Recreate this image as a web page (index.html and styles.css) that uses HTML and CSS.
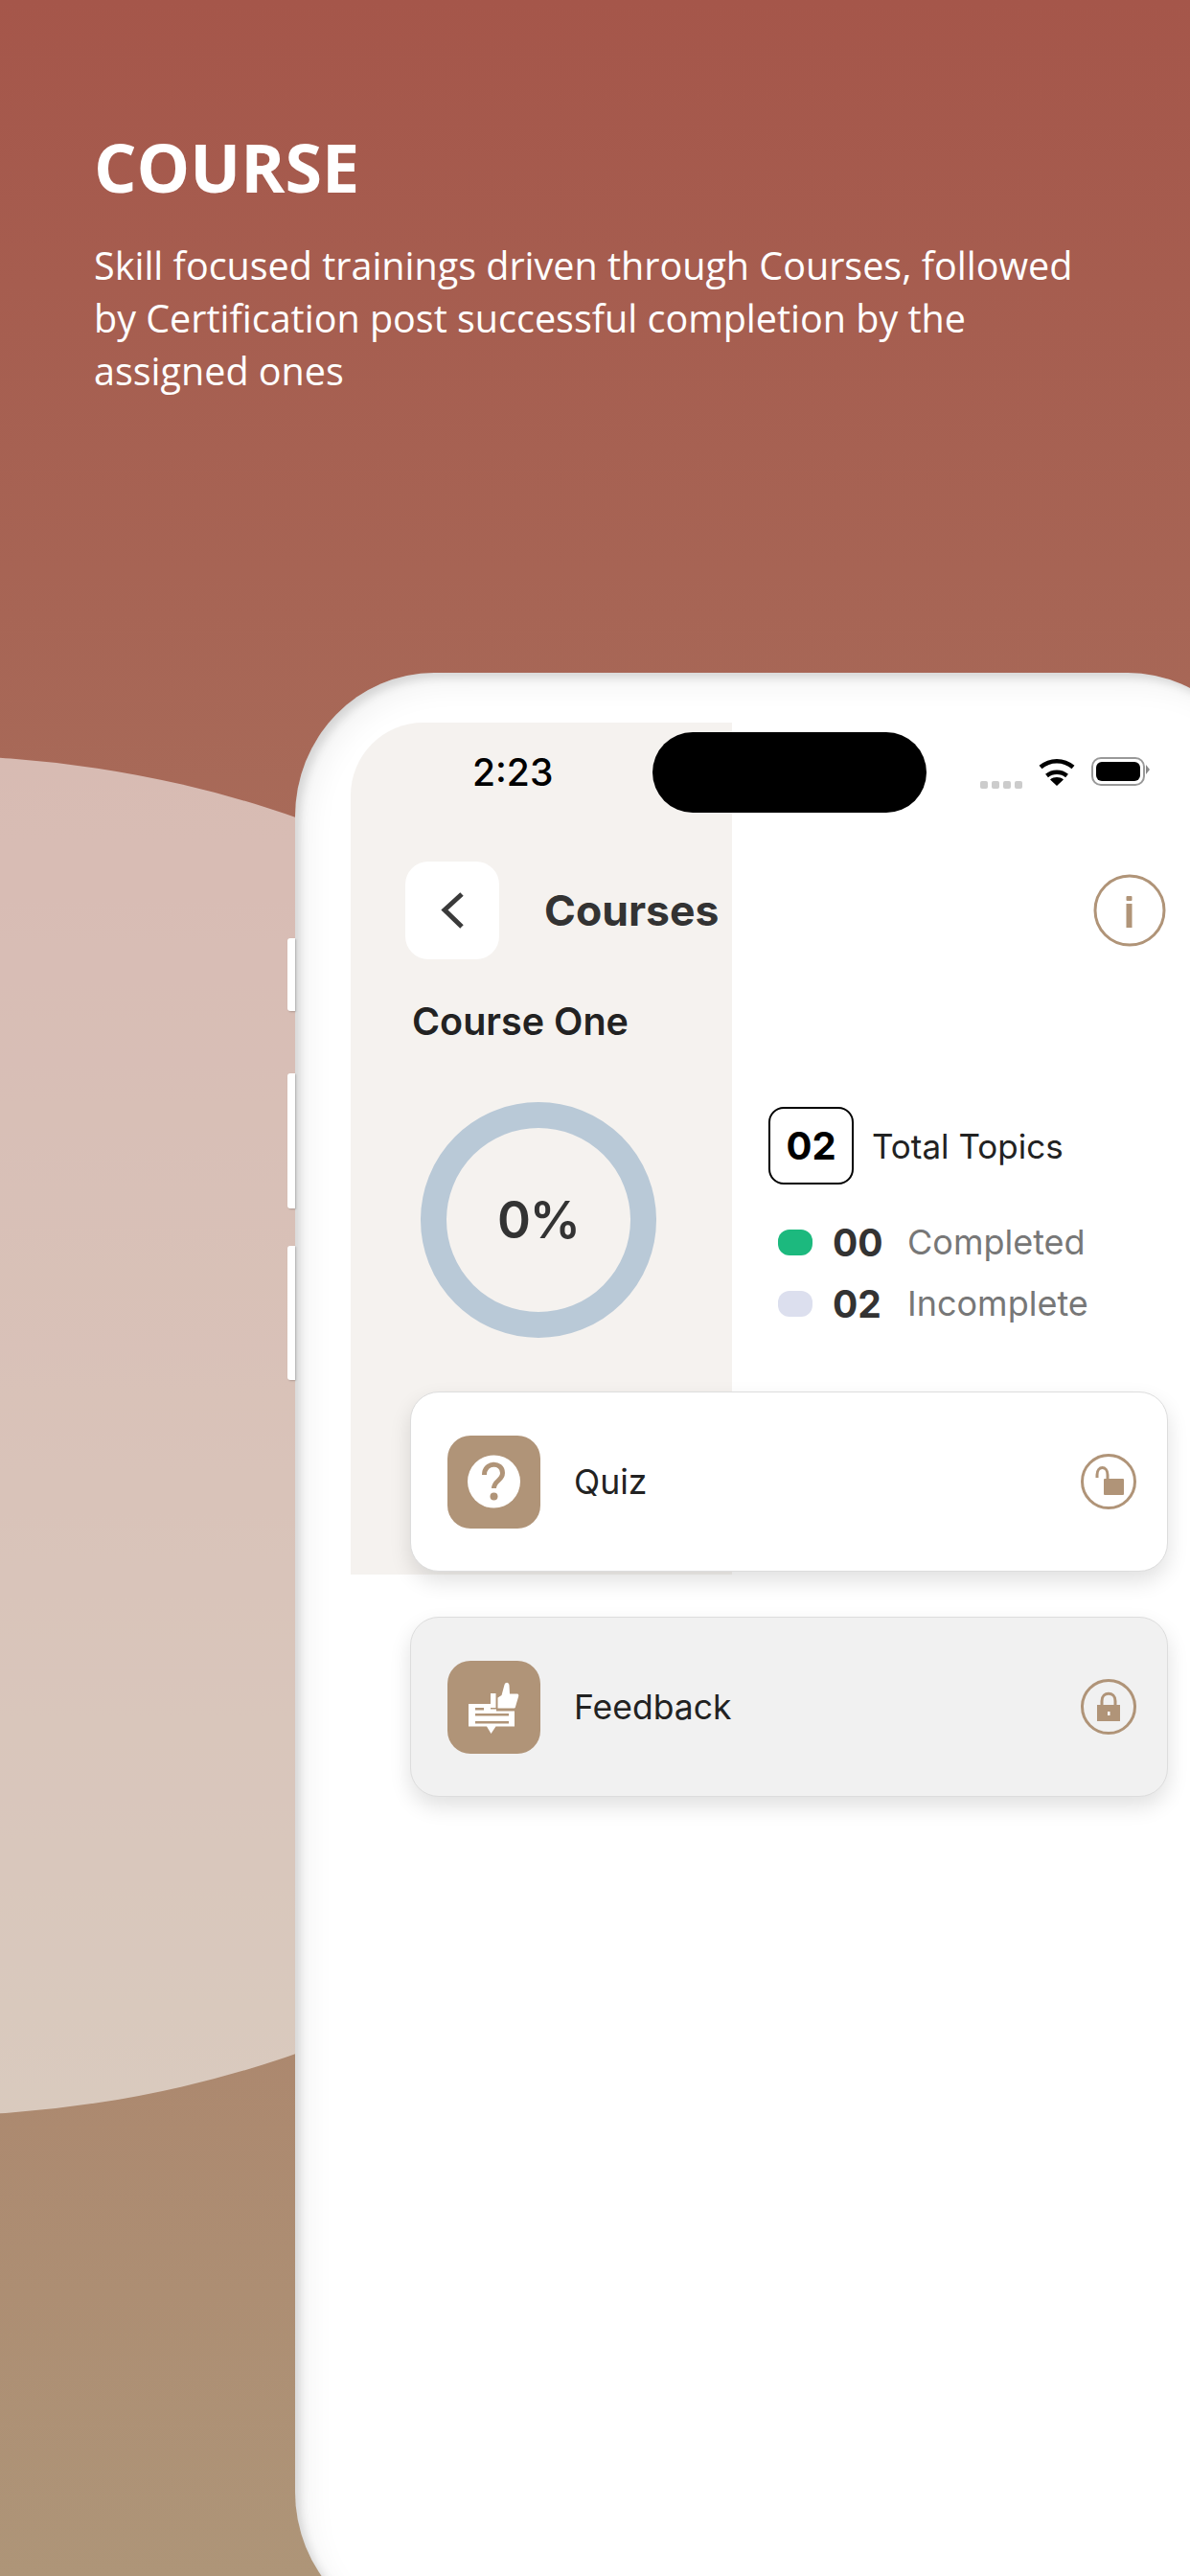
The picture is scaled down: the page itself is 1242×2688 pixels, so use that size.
FILE: index.html
```html
<!DOCTYPE html>
<html lang="en">
<head>
    <meta charset="UTF-8">
    <meta name="viewport" content="width=device-width, initial-scale=1.0">
    <title>Course</title>
    <link rel="stylesheet" href="styles.css">
</head>
<body>
    <div class="blob"></div>

    <header class="hero">
        <h1>COURSE</h1>
        <p>Skill focused trainings driven through Courses, followed<br>by Certification post successful completion by the<br>assigned ones</p>
    </header>

    <div class="phone">
        <span class="side-btn btn-one"></span>
        <span class="side-btn btn-two"></span>
        <span class="side-btn btn-three"></span>

        <div class="screen">
            <div class="status-bar">
                <span class="time">2:23</span>
                <span class="island"></span>
                <span class="signal"><i></i><i></i><i></i><i></i></span>
                <svg class="wifi" width="38" height="30" viewBox="0 0 38 30">
                    <path d="M19 30l-7-6.500c4-3.200 10-3.200 14 0z" fill="#000"/>
                    <path d="M8.500 19.500c6-5 15-5 21 0" fill="none" stroke="#000" stroke-width="4.500"/>
                    <path d="M2 10.500c10-8.500 24-8.500 34 0" fill="none" stroke="#000" stroke-width="4.500"/>
                </svg>
                <span class="battery"><i></i></span>
            </div>

            <div class="top-row">
                <a class="back-btn" href="#">
                    <svg width="30" height="42" viewBox="0 0 30 42">
                        <path d="M25 4L7 20.500 25 38" fill="none" stroke="#3a3a3a" stroke-width="5"/>
                    </svg>
                </a>
                <h2>Courses</h2>
                <svg class="info-icon" width="76" height="76" viewBox="0 0 76 76">
                    <circle cx="38" cy="38" r="36" fill="none" stroke="#b09478" stroke-width="3"/>
                    <rect x="34.500" y="23" width="6" height="5" rx="1" fill="#b09478"/>
                    <rect x="34.500" y="31" width="6" height="25" fill="#b09478"/>
                </svg>
            </div>

            <h3 class="course-name">Course One</h3>

            <div class="stats">
                <div class="ring">0%</div>
                <div class="details">
                    <div class="total-row">
                        <span class="total-box">02</span>
                        <span>Total Topics</span>
                    </div>
                    <div class="legend-row">
                        <span class="dot dot-green"></span>
                        <b>00</b>
                        <span>Completed</span>
                    </div>
                    <div class="legend-row">
                        <span class="dot dot-grey"></span>
                        <b>02</b>
                        <span>Incomplete</span>
                    </div>
                </div>
            </div>

            <div class="card">
                <span class="card-icon">
                    <svg width="97" height="97" viewBox="0 0 97 97">
                        <circle cx="48.500" cy="48" r="27.500" fill="#fff"/>
                        <path d="M38.500 41c0-14 19-14 19-2 0 8-9 8-9 16" fill="none" stroke="#b09478" stroke-width="5"/>
                        <circle cx="48.500" cy="63.500" r="4" fill="#b09478"/>
                    </svg>
                </span>
                <span class="card-label">Quiz</span>
                <svg class="lock" width="58" height="58" viewBox="0 0 58 58">
                    <circle cx="29" cy="29" r="27.500" fill="none" stroke="#b09478" stroke-width="3"/>
                    <path d="M17 25v-3c0-10 11-10 11 0v5" fill="none" stroke="#b09478" stroke-width="3"/>
                    <rect x="24" y="26" width="21" height="17" rx="1" fill="#b09478"/>
                </svg>
            </div>

            <div class="card card-off">
                <span class="card-icon">
                    <svg width="97" height="97" viewBox="0 0 97 97">
                        <path d="M22 45H45V50.500H51V52.500H70V68.500H50.500L45.500 76 41 68.500H22z" fill="#fff"/>
                        <rect x="29" y="49" width="9" height="2.500" fill="#b09478"/>
                        <rect x="29" y="55" width="35" height="2.500" fill="#b09478"/>
                        <rect x="29" y="63" width="35" height="2.500" fill="#b09478"/>
                        <rect x="45" y="34" width="5.500" height="15" fill="#fff"/>
                        <path d="M52.500 38.500l4-2.500 3-11c1-3 4.500-3 5 .5l.5 9h7.500c1.500 0 2 1 1.700 2.500L71 48c-.2 1-.8 1.500-2 1.500H52.500z" fill="#fff"/>
                    </svg>
                </span>
                <span class="card-label">Feedback</span>
                <svg class="lock" width="58" height="58" viewBox="0 0 58 58">
                    <circle cx="29" cy="29" r="27.500" fill="none" stroke="#b09478" stroke-width="3"/>
                    <path d="M22 28v-5c0-10.500 14-10.500 14 0v5" fill="none" stroke="#b09478" stroke-width="3"/>
                    <rect x="17" y="27" width="24" height="17" fill="#b09478"/>
                    <rect x="28" y="34" width="2.500" height="4" fill="#fff"/>
                </svg>
            </div>
        </div>
    </div>
</body>
</html>
```

FILE: styles.css
```css
html {
    overflow: hidden;
}
html, body {
    margin: 0;
    padding: 0;
}
body {
    position: relative;
    width: 1242px;
    height: 2688px;
    overflow: hidden;
    background: linear-gradient(180deg, #a5564a 0%, #ae9578 100%);
    font-family: Inter, "Liberation Sans", sans-serif;
    color: #222;
}

/* pale oval behind the phone */
.blob {
    position: absolute;
    left: -1010px;
    top: 788px;
    width: 1860px;
    height: 1420px;
    border-radius: 50%;
    background-color: rgba(255, 255, 255, 0.55);
}

.hero {
    position: relative;
    box-sizing: border-box;
    height: 702px;
    padding: 131px 0 0 98px;
    color: #fff;
    font-family: "Open Sans", sans-serif;
}
.hero h1 {
    margin: 0;
    font-size: 70px;
    line-height: 86px;
    font-weight: 700;
}
.hero p {
    margin: 33px 0 0;
    font-size: 39.500px;
    line-height: 55px;
    font-weight: 400;
    white-space: nowrap;
}

.phone {
    position: relative;
    box-sizing: border-box;
    width: 1014px;
    height: 2048px;
    margin-left: 308px;
    padding: 52px 40px 52px 58px;
    border-radius: 145px / 150px;
    background-color: #fff;
    box-shadow: inset 5px 5px 10px rgba(0, 0, 0, 0.13), inset 14px 14px 30px rgba(0, 0, 0, 0.05);
}
.side-btn {
    position: absolute;
    left: -8px;
    width: 8px;
    border-radius: 3px 0 0 3px;
    background-color: #fff;
    box-shadow: 1px 1px 2px rgba(0, 0, 0, 0.2);
}
.btn-one {
    top: 277px;
    height: 76px;
}
.btn-two {
    top: 418px;
    height: 141px;
}
.btn-three {
    top: 598px;
    height: 140px;
}

.screen {
    height: 100%;
    border-radius: 76px;
    background: #fff linear-gradient(#f5f2ef, #f5f2ef) no-repeat 0 0 / 398px 889px;
    overflow: hidden;
}

.status-bar {
    display: flex;
    align-items: center;
    height: 84px;
    padding: 10px 0 0 127px;
}
.time {
    width: 188px;
    font-size: 39px;
    line-height: 48px;
    font-weight: 500;
    color: #000;
}
.island {
    width: 286px;
    height: 84px;
    border-radius: 42px;
    background-color: #000;
}
.signal {
    display: flex;
    gap: 4px;
    margin: 26px 0 0 56px;
}
.signal i {
    width: 8px;
    height: 8px;
    border-radius: 2px;
    background-color: #ccc;
}
.wifi {
    margin: -2px 0 0 17px;
}
.battery {
    position: relative;
    box-sizing: border-box;
    width: 56px;
    height: 30px;
    margin: -2px 0 0 17px;
    padding: 3px;
    border: 2px solid #999;
    border-radius: 10px;
}
.battery i {
    display: block;
    height: 100%;
    border-radius: 6px;
    background-color: #000;
}
.battery::after {
    content: "";
    position: absolute;
    top: 6px;
    right: -7px;
    border-left: 4px solid #888;
    border-top: 5px solid transparent;
    border-bottom: 5px solid transparent;
}

.top-row {
    display: flex;
    align-items: center;
    height: 102px;
    margin: 51px 65px 0 57px;
}
.back-btn {
    display: flex;
    align-items: center;
    justify-content: center;
    width: 98px;
    height: 102px;
    border-radius: 24px;
    background-color: #fff;
}
.top-row h2 {
    margin: 0 0 0 47px;
    font-size: 44.500px;
    font-weight: 700;
    color: #333;
}
.info-icon {
    margin-left: auto;
}

.course-name {
    margin: 42px 0 0 64px;
    font-size: 39.500px;
    line-height: 46px;
    font-weight: 600;
    color: #222;
}

.stats {
    display: flex;
    margin: 61px 0 56px 73px;
}
.ring {
    display: flex;
    align-items: center;
    justify-content: center;
    box-sizing: border-box;
    width: 246px;
    height: 246px;
    border: 27px solid #b9c9d7;
    border-radius: 50%;
    font-size: 53px;
    letter-spacing: -1px;
    font-weight: 600;
    color: #333;
}
.details {
    margin: 5px 0 0 117px;
    font-size: 36px;
}
.total-row {
    display: flex;
    align-items: center;
    gap: 19px;
    margin-bottom: 42px;
    font-size: 35px;
    color: #222;
}
.total-box {
    display: flex;
    align-items: center;
    justify-content: center;
    box-sizing: border-box;
    width: 89px;
    height: 81px;
    border: 2px solid #000;
    border-radius: 16px;
    font-size: 40px;
    font-weight: 700;
    color: #000;
}
.legend-row {
    display: flex;
    align-items: center;
    height: 36px;
    margin-left: 10px;
    color: #777;
}
.legend-row + .legend-row {
    margin-top: 28px;
}
.legend-row b {
    width: 78px;
    font-size: 39px;
    font-weight: 700;
    color: #333;
}
.dot {
    width: 36px;
    height: 27px;
    margin-right: 21px;
    border-radius: 12px;
}
.dot-green {
    background-color: #1cb97e;
}
.dot-grey {
    background-color: #dcdfee;
}

.card {
    display: flex;
    align-items: center;
    box-sizing: border-box;
    height: 188px;
    margin: 0 63px 47px 62px;
    padding: 0 32px 0 38px;
    border: 1px solid #ddd;
    border-radius: 30px;
    background-color: #fff;
    box-shadow: 0 10px 22px rgba(0, 0, 0, 0.12);
}
.card-off {
    background-color: #f1f1f1;
}
.card-icon {
    width: 97px;
    height: 97px;
    border-radius: 24px;
    background-color: #b09478;
}
.card-label {
    margin-left: 35px;
    font-size: 35.500px;
    color: #222;
}
.lock {
    margin-left: auto;
}
```
